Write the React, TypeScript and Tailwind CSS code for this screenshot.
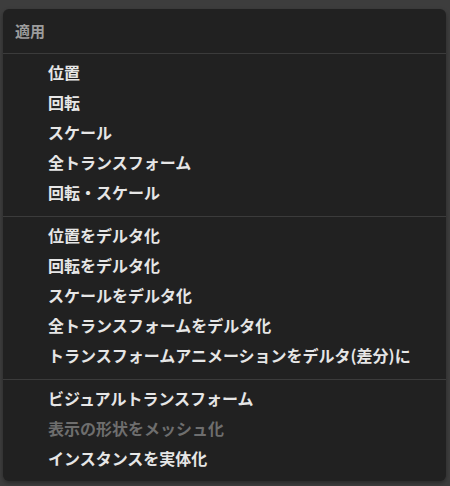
const groups: { label: string; disabled?: boolean }[][] = [
  [
    { label: "位置" },
    { label: "回転" },
    { label: "スケール" },
    { label: "全トランスフォーム" },
    { label: "回転・スケール" },
  ],
  [
    { label: "位置をデルタ化" },
    { label: "回転をデルタ化" },
    { label: "スケールをデルタ化" },
    { label: "全トランスフォームをデルタ化" },
    { label: "トランスフォームアニメーションをデルタ(差分)に" },
  ],
  [
    { label: "ビジュアルトランスフォーム" },
    { label: "表示の形状をメッシュ化", disabled: true },
    { label: "インスタンスを実体化" },
  ],
];

export default function App() {
  return (
    <div
      className="h-[486px] w-[450px] overflow-hidden bg-[#3d3d3d] pl-[3px] pr-[4px] pt-[9px]"
      style={{ fontFamily: '"Noto Sans CJK JP", "Noto Sans", sans-serif' }}
    >
      <div className="flex h-[472px] flex-col rounded-[6px] bg-[#212121] shadow-[0_2px_4px_rgba(0,0,0,0.35)]">
        <div className="flex h-[44px] items-center px-3 text-[15px] font-bold text-[#9c9c9c]">
          適用
        </div>
        <div className="h-px bg-[#3b3b3b]" />
        {groups.map((group, gi) => (
          <div key={gi} className="flex flex-col">
            {gi > 0 && <div className="mb-[3px] mt-[9px] h-px bg-[#3b3b3b]" />}
            <div className={gi === 0 ? "flex flex-col pt-[3px]" : "flex flex-col"}>
              {group.map((item) => (
                <div
                  key={item.label}
                  className={`flex h-[30px] items-center whitespace-nowrap pl-[45px] text-[16px] font-bold ${
                    item.disabled ? "text-[#6e6e6e]" : "text-[#e6e6e6]"
                  }`}
                >
                  {item.label}
                </div>
              ))}
            </div>
          </div>
        ))}
      </div>
    </div>
  );
}
